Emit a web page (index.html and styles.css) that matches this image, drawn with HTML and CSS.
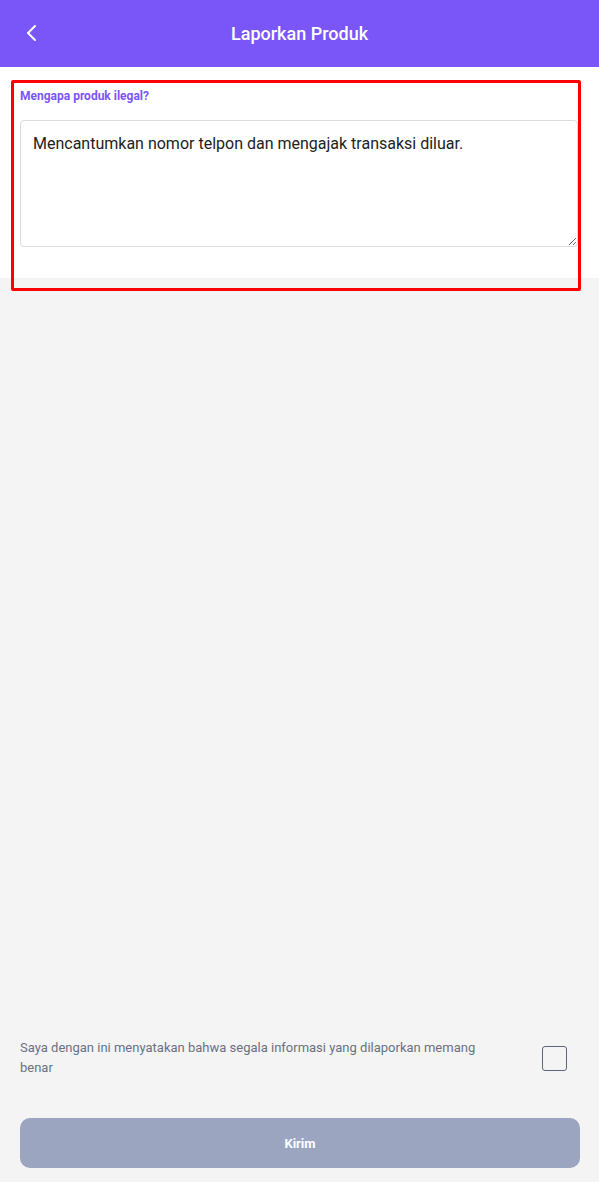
FILE: index.html
```html
<!DOCTYPE html>
<html lang="id">
<head>
  <meta charset="UTF-8" />
  <meta name="viewport" content="width=device-width, initial-scale=1.0"/>
  <title>Laporkan Produk</title>
  <link rel="stylesheet" href="styles.css">
</head>
<body>

<header class="topbar">
  <a class="back" href="#">
    <svg width="14" height="18" viewBox="0 0 14 18"><path d="M10 2 L3 9 L10 16" fill="none" stroke="#fff" stroke-width="2" stroke-linecap="round" stroke-linejoin="round"/></svg>
  </a>
  <h1>Laporkan Produk</h1>
</header>

<section class="form-card">
  <label for="reason">Mengapa produk ilegal?</label>
  <textarea id="reason">Mencantumkan nomor telpon dan mengajak transaksi diluar.</textarea>
  <div class="highlight"></div>
</section>

<div class="spacer"></div>

<footer class="bottom">
  <div class="agree">
    <p>Saya dengan ini menyatakan bahwa segala informasi yang dilaporkan memang benar</p>
    <span class="check"></span>
  </div>
  <button>Kirim</button>
</footer>

</body>
</html>
```
FILE: styles.css
```css
html, body { height: 100%; }
body { font-family: Roboto, "Noto Sans", sans-serif; margin: 0; background: #f4f4f4; display: flex; flex-direction: column; min-height: 1182px; }
.topbar { background: #7a55f8; height: 67px; display: flex; align-items: center; justify-content: center; position: relative; }
.topbar h1 { color: #fff; font-size: 18px; font-weight: 500; margin: 0; }
.back { position: absolute; left: 25px; top: 24px; }
.form-card { background: #fff; padding: 22px 21px 31px 20px; position: relative; }
.form-card label { display: block; color: #7a55f8; font-size: 12px; font-weight: 700; margin-bottom: 17px; }
.form-card textarea { display: block; width: 100%; box-sizing: border-box; height: 127px; border: 1px solid #dcdcdc; border-radius: 4px; padding: 13px 12px; font-family: inherit; font-size: 16px; color: #222; resize: vertical; }
.highlight { position: absolute; left: 11px; top: 13px; width: 570px; height: 211px; box-sizing: border-box; border: 3px solid #ff0000; border-radius: 2px; pointer-events: none; }
.spacer { flex: 1; }
.bottom { padding: 0 19px 14px 20px; }
.agree { display: flex; align-items: flex-start; justify-content: space-between; gap: 30px; margin-bottom: 40px; }
.agree p { margin: -4px 0 0; max-width: 490px; font-size: 13px; line-height: 20px; color: #6b7183; }
.check { flex: none; width: 23px; height: 23px; border: 1px solid #5c6579; border-radius: 3px; margin: 4px 13px 0 0; }
button { width: 100%; height: 50px; background: #9ca5c0; border: none; color: #fff; border-radius: 10px; font-family: inherit; font-size: 13px; font-weight: 700; }
```
